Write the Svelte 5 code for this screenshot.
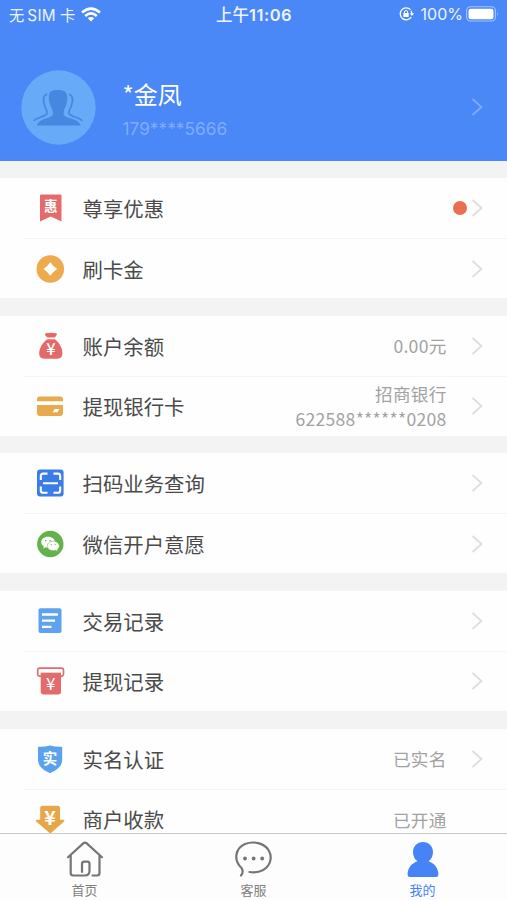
<script lang="ts">
  type Row = { icon: string, label: string, value?: Array<string>, dot?: boolean, arrow?: boolean };

  const groups: Array<Array<Row>> = [
    [
      { icon: "coupon", label: "尊享优惠", dot: true },
      { icon: "coin", label: "刷卡金" },
    ],
    [
      { icon: "bag", label: "账户余额", value: ["0.00元"] },
      { icon: "card", label: "提现银行卡", value: ["招商银行", "622588******0208"] },
    ],
    [
      { icon: "scan", label: "扫码业务查询" },
      { icon: "wechat", label: "微信开户意愿" },
    ],
    [
      { icon: "list", label: "交易记录" },
      { icon: "withdraw", label: "提现记录" },
    ],
    [
      { icon: "shield", label: "实名认证", value: ["已实名"] },
      { icon: "receive", label: "商户收款", value: ["已开通"], arrow: false },
    ],
  ];

  const tabs = [
    { id: "home", label: "首页" },
    { id: "service", label: "客服" },
    { id: "mine", label: "我的" },
  ];
  let active = $state("mine");
</script>

{#snippet chevron()}
  <svg class="chevron" width="12" height="20" viewBox="0 0 12 20">
    <path d="M1.5 2 L10.5 10 L1.5 18" />
  </svg>
{/snippet}

{#snippet rowIcon(name: string)}
  <svg class="icon" width="28" height="28" viewBox="0 0 28 28">
    {#if name == "coupon"}
      <path fill="#e56a6a" d="M4 1.5a1 1 0 0 1 1-1h19.500a1 1 0 0 1 1 1V27.500L14.700 22.500 4 27.500z" />
      <text x="14.700" y="17" font-size="13.500" font-weight="700">惠</text>
    {:else if name == "coin"}
      <circle cx="14.300" cy="14" r="13.800" fill="#eeab4d" />
      <path fill="#fff" d="M14.300 7.200Q17 11.300 21.100 14 17 16.700 14.300 20.800 11.600 16.700 7.500 14 11.600 11.300 14.300 7.200z" />
    {:else if name == "bag"}
      <path fill="#e36a69" d="M9.600 1.300Q14.500 0 20.300 1.300 21.500 2 20.500 3.200L18.800 5.600H11.300L9.200 3.200Q8.600 2 9.600 1.300zM11.300 7.200H18.800C23 10 26.400 16 26.400 20.800 26.400 25 24.500 26.700 21.500 26.700H8.200C5 26.700 3.200 25 3.200 21 3.200 16 7 10 11.300 7.200z" />
      <text x="14.900" y="23" font-size="16.500" font-weight="500">¥</text>
    {:else if name == "card"}
      <path fill="#e9aa4e" d="M1 9.300V7.500Q1 4.600 3.900 4.600H24.100Q27 4.600 27 7.500V9.300zM1 13H27V21Q27 23.900 24.100 23.900H3.900Q1 23.900 1 21z" />
      <path fill="#fff" d="M18.600 17H23.300L21.500 20.300H16.800z" />
    {:else if name == "scan"}
      <rect x="1" y=".5" width="26.600" height="27" rx="3" fill="#3b7de6" />
      <path class="line" stroke-width="2.100" d="M4.800 11V7Q4.800 4.600 7.200 4.600H11.500M17.500 4.600H21.800Q24.200 4.600 24.200 7V11M24.200 17.400V21.400Q24.200 23.800 21.800 23.800H17.500M11.500 23.800H7.200Q4.800 23.800 4.800 21.400V17.400M7 14.200H22" />
    {:else if name == "wechat"}
      <circle cx="14.300" cy="14" r="13.200" fill="#62b34b" />
      <path fill="#fff" d="M12 6.800c4 0 7 2.500 7 5.400 0 3-3 5.500-7 5.500q-1.200 0-2.400-.4L7.200 18.500l.7-2.300c-1.700-1-2.700-2.400-2.700-4 0-2.900 3-5.400 6.800-5.400z" />
      <path fill="#fff" stroke="#62b34b" stroke-width=".5" d="M17.300 11.200c3.500 0 6 2.200 6 4.800 0 1.400-.8 2.500-1.900 3.400l.6 2.100-2.200-1.200q-1.200.4-2.500.4c-3.500 0-6-2.100-6-4.700s2.500-4.800 6-4.800z" />
      <g fill="#62b34b">
        <circle cx="9.700" cy="10.700" r=".8" /><circle cx="14.100" cy="10.700" r=".8" />
        <circle cx="15.300" cy="14.600" r=".6" /><circle cx="19.200" cy="14.600" r=".6" />
      </g>
    {:else if name == "list"}
      <rect x="2.500" y="1.300" width="23" height="24.700" rx="2" fill="#5fa2f0" />
      <path class="line" stroke-width="2.300" d="M6 7.500H22M6 13.700H19M6 19.900H15.500" />
    {:else if name == "withdraw"}
      <rect x="1.700" y="1.100" width="25.800" height="8" rx="2" fill="none" stroke="#e36b6b" stroke-width="1.600" />
      <path fill="#e36b6b" d="M4.700 5.300H25V25Q25 27.400 22.600 27.400H7.100Q4.700 27.400 4.700 25z" />
      <path stroke="#fff" stroke-width="1.500" d="M4 4.800H25.500" />
      <text x="14.700" y="22.800" font-size="17" font-weight="400">¥</text>
    {:else if name == "shield"}
      <path fill="#5ba2ed" d="M14 .5Q19 1.800 25.200 1.700 26.200 1.700 26.200 2.800V14.500C26.200 21 21.500 24.700 14 28.200 6.500 24.700 2 21 2 14.500V2.800Q2 1.700 3 1.700 9 1.800 14 .5z" />
      <text x="14.100" y="19.400" font-size="14.500" font-weight="700">实</text>
    {:else}
      <path fill="#e7a748" d="M4.200 3Q4.200.8 6.400.8H21.800Q24 .8 24 3V14.700H27.600Q29 15.300 28 16.500L15.700 27.600Q14.300 28.600 12.900 27.600L.2 16.500Q-.8 15.300.6 14.700H4.200z" />
      <text x="14" y="20" font-size="19.500" font-weight="700">¥</text>
    {/if}
  </svg>
{/snippet}

<div class="screen">
  <header>
    <div class="status">
      <div class="carrier">
        <span>无<i>SIM</i>卡</span>
        <svg width="20" height="15" viewBox="0 0 20 15">
          <g fill="none" stroke="#fff" stroke-width="2.600">
            <path d="M1 5.500Q10-2.400 19 5.500" />
            <path d="M4.200 8.900Q10 3.900 15.800 8.900" />
          </g>
          <path fill="#fff" d="M6.800 11.200Q10 8.600 13.200 11.200L10 14.500z" />
        </svg>
      </div>
      <div class="time">上午<span>11:06</span></div>
      <div class="power">
        <svg width="15" height="14" viewBox="0 0 15 14">
          <path d="M11.500 2.600A6 6 0 1 0 12.300 10M12.600 7.500A6 6 0 0 0 12.100 3.700" fill="none" stroke="#fff" stroke-width="1.300" />
          <path d="M10.700 6.200H15L12.900 9z" fill="#fff" />
          <rect x="4.300" y="6" width="5.400" height="4" rx=".6" fill="#fff" />
          <path d="M5.400 6.300V5Q5.400 3.500 7 3.500T8.600 5V6.300" fill="none" stroke="#fff" stroke-width="1" />
        </svg>
        <span>100%</span>
        <svg width="33" height="16" viewBox="0 0 33 16">
          <rect x=".6" y=".8" width="28.800" height="14.200" rx="4" fill="none" stroke="#a9c6fc" stroke-width="1.100" />
          <rect x="2.500" y="2.700" width="25" height="10.500" rx="2.300" fill="#fff" />
          <path d="M31 5.600Q32.600 7.900 31 10.200z" fill="#a9c6fc" />
        </svg>
      </div>
    </div>
    <div class="profile">
      <svg class="avatar" width="75" height="75" viewBox="0 0 75 75">
        <circle cx="37.500" cy="37.500" r="37.200" fill="#67abf8" />
        <g fill="none" stroke="#4688df" stroke-width="1.700">
          <path d="M26 24C21.500 26 22 31 23.500 35.500 24.500 39 26.500 40 26 43.500 24 47 16 47 12.700 51" />
          <path d="M48 24C52.500 26 52 31 50.500 35.500 49.500 39 47.500 40 48 43.500 50 47 58 47 61.300 51" />
        </g>
        <path fill="#4688df" d="M29 22Q32 19.500 37 20 45.500 19.500 46.200 26 46.500 33 44.300 37 42.500 40 42.500 44C43 49 57.500 47.500 59.500 55.500H16C18 47.500 31.500 49 32 44 32 40 30.300 38 29.200 35 27 28 28 25 29 22z" />
      </svg>
      <div class="who">
        <div class="name">*金凤</div>
        <div class="phone">179****5666</div>
      </div>
      {@render chevron()}
    </div>
  </header>

  <main>
    {#each groups as group}
      <section>
        {#each group as row}
          <div class="row">
            {@render rowIcon(row.icon)}
            <span class="label">{row.label}</span>
            {#if row.value}
              <div class="value">
                {#each row.value as line}
                  <div>{line}</div>
                {/each}
              </div>
            {/if}
            {#if row.dot}
              <span class="dot"></span>
            {/if}
            {#if row.arrow !== false}
              {@render chevron()}
            {:else}
              <span class="noarrow"></span>
            {/if}
          </div>
        {/each}
      </section>
    {/each}
  </main>

  <nav>
    {#each tabs as tab}
      <button class:active={active == tab.id} onclick={() => (active = tab.id)}>
        <svg width="38" height="38" viewBox="0 0 38 38">
          {#if tab.id == "home"}
            <path class="outline" d="M2 17.200L17.500 3.200Q19 2 20.500 3.200L36 17.200M4.700 15.500V33Q4.700 35.500 7.200 35.500H18.500Q23.500 35.500 23.500 31V24Q23.500 21.700 21.500 21.700H18.500Q16 21.700 16 24V32M26.500 35.500H31Q33.500 35.500 33.500 33V15.500" />
          {:else if tab.id == "service"}
            <path class="outline" d="M6 35.500Q9 32 6.500 28C-2 20 .5 8 10 4 18 .8 29 2.800 33.500 10 38.500 18.500 34.500 28.500 24.500 31.500 20.500 32.600 17.500 32.500 14.500 32" />
            <g fill="#757575">
              <circle cx="10" cy="18.500" r="1.900" /><circle cx="18.600" cy="18.500" r="1.900" /><circle cx="27.200" cy="18.500" r="1.900" />
            </g>
          {:else}
            <path fill="#4683f6" d="M19 2C25 2 29 6.500 29 12 29 16.500 27 19.500 24.500 21.300 31 23.500 34.400 28.500 34.400 34.500Q34.400 37 32 37H6Q3.600 37 3.600 34.500C3.600 28.500 7 23.500 13.500 21.300 11 19.500 9 16.500 9 12 9 6.500 13 2 19 2z" />
          {/if}
        </svg>
        <span>{tab.label}</span>
      </button>
    {/each}
  </nav>
</div>

<style>
:global(body) {
  margin: 0;
  overflow: hidden;
}

.screen {
  display: flex;
  flex-direction: column;
  height: 900px;
  background: #f3f3f3;
  font-family: "Noto Sans CJK SC", "Noto Sans", sans-serif;
  color: #4a4a4a;
}

header {
  height: 160.6px;
  flex: none;
  background: #4a87f7;
  color: #fff;
}

.status {
  display: grid;
  grid-template-columns: 1fr auto 1fr;
  align-items: center;
  height: 28px;
  padding: 0 8px 0 9px;
  font-family: Inter, "Noto Sans CJK SC", sans-serif;
  font-size: 15.3px;
  color: #eef4ff;
}

.carrier, .power {
  display: flex;
  align-items: center;
}

.carrier {
  gap: 6px;
}

.carrier i {
  font-style: normal;
  margin: 0 4px 0 3px;
  letter-spacing: 0.3px;
}

.time {
  font-size: 16.5px;
  font-weight: 500;
}

.time span {
  font-weight: 600;
  letter-spacing: 0.5px;
}

.power {
  justify-content: flex-end;
  font-size: 16px;
}

.power span {
  margin: 0 3px 0 7px;
}

.profile {
  display: flex;
  align-items: center;
  height: 75px;
  padding: 41.5px 24px 0 20.5px;
}

.who {
  flex: 1;
  margin-left: 27px;
  padding-top: 3px;
}

.name {
  font-size: 24px;
  line-height: 34px;
}

.phone {
  font-family: Inter, sans-serif;
  font-size: 17.3px;
  line-height: 22px;
  margin-top: 7px;
  color: #7eacfb;
}

.chevron {
  flex: none;
  fill: none;
  stroke: #dedede;
  stroke-width: 1.8;
}

header .chevron {
  stroke: #80abfa;
}

main {
  flex: 1;
  min-height: 0;
  overflow: hidden;
}

section {
  margin-top: 17.6px;
  background: #fefefe;
}

.row {
  display: flex;
  align-items: center;
  height: 60px;
  padding: 0 24px 0 36px;
}

.row + .row {
  height: 59px;
  border-top: 1px solid transparent;
  border-image: linear-gradient(to right, transparent 25px, #f4f4f4 25px) 1;
}

.icon {
  flex: none;
  overflow: visible;
}

.icon text {
  fill: #fff;
  text-anchor: middle;
}

.icon .line {
  fill: none;
  stroke: #fff;
}

.label {
  flex: 1;
  margin-left: 18.5px;
  font-size: 20.4px;
  white-space: nowrap;
}

.value {
  margin-right: 24.5px;
  font-size: 17.6px;
  line-height: 25px;
  letter-spacing: 0.25px;
  text-align: right;
  color: #a2a2a2;
}

.dot {
  width: 14px;
  height: 14px;
  margin-right: 4.5px;
  border-radius: 50%;
  background: #e87050;
}

.noarrow {
  width: 12px;
}

nav {
  display: flex;
  flex: none;
  height: 66px;
  border-top: 1px solid #c9c9c9;
  background: #fdfdfd;
}

button {
  display: flex;
  flex: 1;
  flex-direction: column;
  align-items: center;
  padding: 6px 0 0;
  border: 0;
  background: none;
  font-family: inherit;
  font-size: 13px;
  line-height: 19px;
  color: #808080;
}

button span {
  margin-top: 2px;
}

button.active {
  color: #4683f6;
}

.outline {
  fill: none;
  stroke: #757575;
  stroke-width: 2.2;
  stroke-linecap: round;
}
</style>
